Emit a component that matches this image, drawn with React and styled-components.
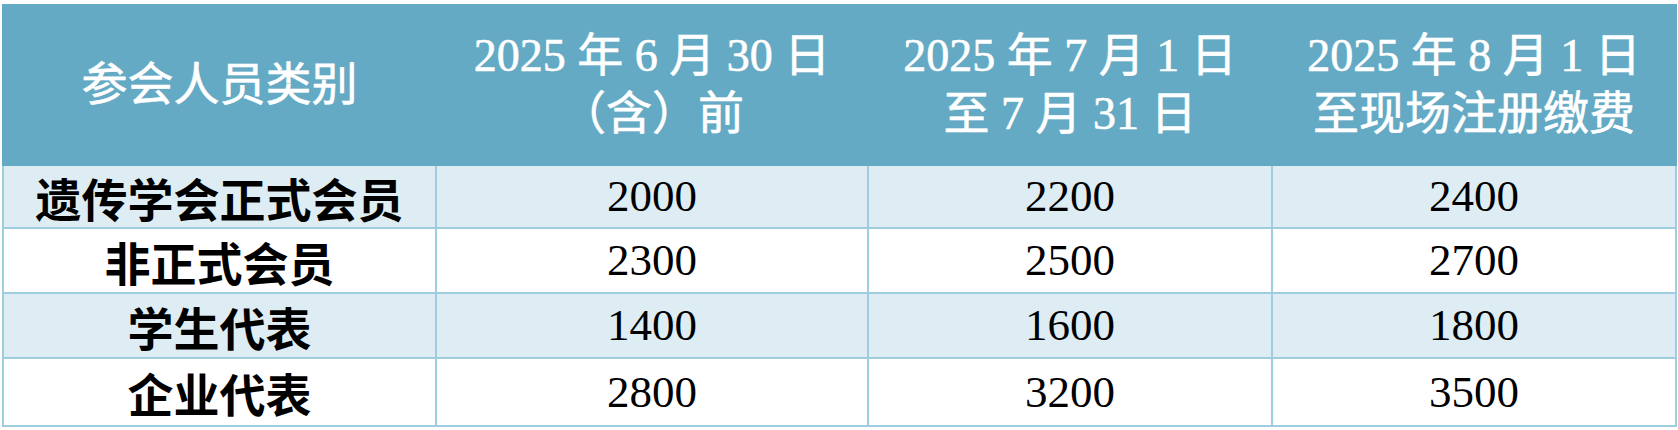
import React from "react";
import styled, { createGlobalStyle } from "styled-components";

const Global = createGlobalStyle`
  html, body { margin: 0; padding: 0; background: #ffffff; }
  body { padding: 4px 0 0 2px; }
`;

const Table = styled.table`
  width: 1673px;
  border-collapse: collapse;
  table-layout: fixed;
  font-family: "Liberation Serif", "Noto Sans CJK SC", serif;
`;

const HeadCell = styled.th`
  height: 158px;
  padding: 0;
  background: #65aac4;
  color: #ffffff;
  font-weight: 400;
  font-size: 46px;
  line-height: 58px;
  text-align: center;
  vertical-align: middle;
  border: 2px solid #65aac4;
  -webkit-text-stroke: 0.6px #ffffff;
`;

const Row = styled.tr`
  background: ${(p) => (p.$striped ? "#ddedf3" : "#ffffff")};
`;

const Cell = styled.td`
  height: ${(p) => p.$h}px;
  padding: 0;
  text-align: center;
  vertical-align: middle;
  border: 2px solid #9fcde0;
  color: #000000;
  line-height: 1;
  font-size: ${(p) => (p.$label ? 46 : 45)}px;
  font-family: ${(p) =>
    p.$label
      ? `"Noto Sans CJK SC", sans-serif`
      : `"Liberation Serif", "Noto Sans CJK SC", serif`};
  font-weight: ${(p) => (p.$label ? 700 : 400)};
`;

const Num = styled.span`
  font-family: "Liberation Serif", serif;
  font-size: 46px;
`;

const mixed = (text) =>
  text.split(/(\d+)/).map((part, i) =>
    /^\d+$/.test(part) ? <Num key={i}>{part}</Num> : part
  );

const cols = [433, 432, 404, 404];

const headers = [
  ["参会人员类别"],
  ["2025 年 6 月 30 日", "（含）前"],
  ["2025 年 7 月 1 日", "至 7 月 31 日"],
  ["2025 年 8 月 1 日", "至现场注册缴费"],
];

const rows = [
  ["遗传学会正式会员", "2000", "2200", "2400"],
  ["非正式会员", "2300", "2500", "2700"],
  ["学生代表", "1400", "1600", "1800"],
  ["企业代表", "2800", "3200", "3500"],
];

const heights = [61, 63, 63, 66];

export default function App() {
  return (
    <>
      <Global />
      <Table>
        <colgroup>
          {cols.map((w, i) => (
            <col key={i} style={{ width: w }} />
          ))}
        </colgroup>
        <thead>
          <tr>
            {headers.map((lines, i) => (
              <HeadCell key={i}>
                {lines.map((l, k) => (
                  <React.Fragment key={k}>
                    {k > 0 && <br />}
                    {mixed(l)}
                  </React.Fragment>
                ))}
              </HeadCell>
            ))}
          </tr>
        </thead>
        <tbody>
          {rows.map((r, i) => (
            <Row key={i} $striped={i % 2 === 0}>
              {r.map((c, j) => (
                <Cell key={j} $label={j === 0} $h={heights[i]}>
                  {c}
                </Cell>
              ))}
            </Row>
          ))}
        </tbody>
      </Table>
    </>
  );
}
